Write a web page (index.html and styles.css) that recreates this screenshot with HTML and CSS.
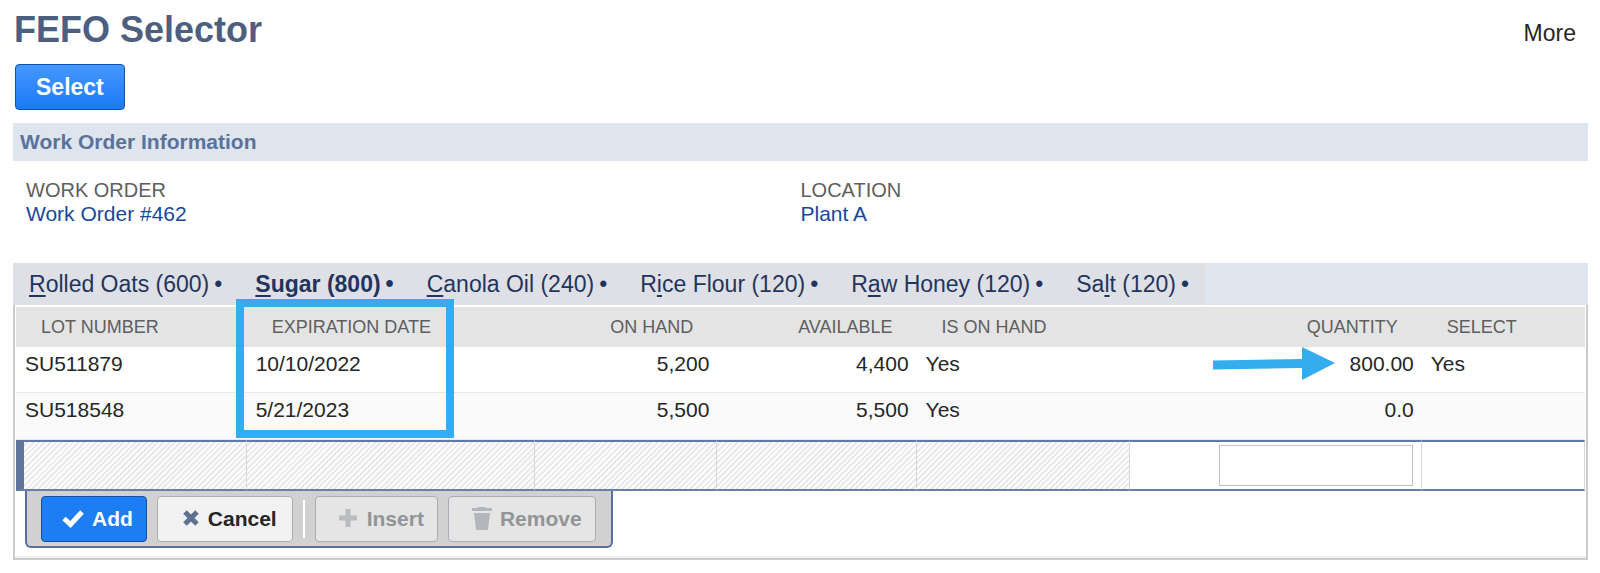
FILE: index.html
```html
<!DOCTYPE html>
<html lang="en">
<head>
<meta charset="utf-8">
<title>FEFO Selector</title>
<link rel="stylesheet" href="styles.css">
</head>
<body>
<header class="page-head">
  <h1 class="title">FEFO Selector</h1>
  <a class="more" href="#more">More</a>
</header>
<button class="btn btn-select" type="button">Select</button>

<section>
  <h2 class="section-bar">Work Order Information</h2>
  <dl class="fields">
    <div class="field">
      <dt>WORK ORDER</dt>
      <dd><a href="#wo462">Work Order #462</a></dd>
    </div>
    <div class="field">
      <dt>LOCATION</dt>
      <dd><a href="#plant-a">Plant A</a></dd>
    </div>
  </dl>
</section>

<nav class="tabs">
  <div class="tab-list">
    <a class="tab" href="#oats"><span><u>R</u>olled Oats (600)</span><span>•</span></a>
    <a class="tab active" href="#sugar" aria-current="page"><span><u>S</u>ugar (800)</span><span>•</span></a>
    <a class="tab" href="#oil"><span><u>C</u>anola Oil (240)</span><span>•</span></a>
    <a class="tab" href="#flour"><span>R<u>i</u>ce Flour (120)</span><span>•</span></a>
    <a class="tab" href="#honey"><span>R<u>a</u>w Honey (120)</span><span>•</span></a>
    <a class="tab" href="#salt"><span>Sa<u>l</u>t (120)</span><span>•</span></a>
  </div>
</nav>

<main class="panel">
  <table class="lots">
    <colgroup>
      <col class="c-lot"><col class="c-exp"><col class="c-hand"><col class="c-avail"><col class="c-is"><col class="c-qty"><col>
    </colgroup>
    <thead>
      <tr>
        <th scope="col">LOT NUMBER</th>
        <th scope="col" class="anchor">EXPIRATION DATE<span class="highlight"></span></th>
        <th scope="col" class="num">ON HAND</th>
        <th scope="col" class="num">AVAILABLE</th>
        <th scope="col">IS ON HAND</th>
        <th scope="col" class="num">QUANTITY</th>
        <th scope="col">SELECT</th>
      </tr>
    </thead>
    <tbody>
      <tr>
        <td>SU511879</td><td>10/10/2022</td><td class="num">5,200</td><td class="num">4,400</td><td>Yes</td>
        <td class="num anchor">800.00<svg class="arrow" width="122" height="34" viewBox="0 0 122 34" aria-hidden="true"><path d="M0 13.5 89 12V0L122 16 89 33V21L0 22.5Z" fill="#33adee"/></svg></td>
        <td>Yes</td>
      </tr>
      <tr class="alt">
        <td>SU518548</td><td>5/21/2023</td><td class="num">5,500</td><td class="num">5,500</td><td>Yes</td>
        <td class="num">0.0</td><td></td>
      </tr>
      <tr class="edit">
        <td class="locked first"></td><td class="locked"></td><td class="locked"></td><td class="locked"></td><td class="locked"></td>
        <td class="num"><input class="qty" type="text" aria-label="Quantity"></td>
        <td></td>
      </tr>
    </tbody>
  </table>
  <div class="toolbar">
    <button class="btn btn-add" type="button">
      <svg width="22" height="18" viewBox="0 0 22 18" aria-hidden="true"><path d="M2 8.500 8.500 14.500 20 2" fill="none" stroke="#fff" stroke-width="5"/></svg>Add</button>
    <button class="btn btn-cancel" type="button">
      <svg width="18" height="18" viewBox="0 0 18 18" aria-hidden="true"><path d="M3 2 15 14M15 2 3 14" fill="none" stroke="#5f7190" stroke-width="5"/></svg>Cancel</button>
    <span class="divider"></span>
    <button class="btn btn-insert" type="button" disabled>
      <svg width="20" height="20" viewBox="0 0 20 20" aria-hidden="true"><path d="M9 0V18M0 9H18" fill="none" stroke="#b9bbbe" stroke-width="5"/></svg>Insert</button>
    <button class="btn btn-remove" type="button" disabled>
      <svg width="20" height="24" viewBox="0 0 20 24" aria-hidden="true"><path d="M0 1H6V0H14V1H20V4H0ZM2 6H18L16 23H4Z" fill="#b3b6ba"/></svg>Remove</button>
  </div>
</main>
</body>
</html>
```
FILE: styles.css
```css
* { box-sizing: border-box; }

body {
  margin: 0;
  padding: 8px 12px 12px 13px;
  background: #fff;
  color: #262626;
  font-family: "Liberation Sans", Arial, sans-serif;
  font-size: 21px;
  line-height: 24px;
}

h1, h2, dl, dd { margin: 0; }
a { color: #18489c; text-decoration: none; }

.page-head {
  display: flex;
  justify-content: space-between;
  height: 56px;
}
.title {
  padding-left: 1px;
  color: #4d5f7e;
  font-size: 36px;
  line-height: 44px;
}
.more {
  padding: 12px 12px 0 0;
  color: #262626;
  font-size: 23px;
  line-height: 26px;
}

.btn {
  display: inline-flex;
  align-items: center;
  height: 46px;
  border: 1px solid #a9aeb6;
  border-radius: 4px;
  padding: 0 15px 0 20px;
  background: #f2f2f2;
  color: #262626;
  font: bold 21px "Liberation Sans", Arial, sans-serif;
}
.btn-select {
  display: flex;
  margin: 0 0 13px 2px;
  padding: 0 20px;
  border-color: #1350a8;
  background: linear-gradient(#4697ff, #1a7bf5);
  color: #fff;
  font-size: 23px;
}

.section-bar {
  padding: 7px;
  background: #dfe5ef;
  color: #5b7299;
  font-size: 21px;
  line-height: 24px;
}
.fields {
  display: grid;
  grid-template-columns: 1fr 1fr;
  padding: 17px 13px 0;
  height: 102px;
}
.field dt {
  color: #5e5e5e;
  font-size: 20px;
}

.tabs { background: #dfe5ef; }
.tab-list {
  display: inline-flex;
  vertical-align: top;
  gap: 33px;
  height: 42px;
  padding: 8px 16px 0;
  background: #dfe0e5;
}
.tab {
  display: flex;
  gap: 5px;
  position: relative;
  color: #1f355e;
  font-size: 23px;
  line-height: 26px;
}
.tab u { text-underline-offset: 3px; text-decoration-thickness: 2px; }
.active { font-weight: bold; }
.active::after {
  content: "";
  position: absolute;
  left: 50%;
  bottom: 0;
  border: 8px solid transparent;
  border-top: 0;
  border-bottom-color: #fff;
}

.panel {
  padding: 2px 1px 10px;
  border: 2px solid #cbcbcb;
  border-top: 0;
  box-shadow: inset 0 -2px #f0f0f0;
}
.lots {
  width: 100%;
  table-layout: fixed;
  border-collapse: separate;
  border-spacing: 0;
}
.c-lot { width: 14.7%; }
.c-exp { width: 18.4%; }
.c-hand { width: 11.6%; }
.c-avail { width: 12.7%; }
.c-is { width: 13.6%; }
.c-qty { width: 18.6%; }

th {
  height: 40px;
  padding: 0 24px 0 25px;
  background: #e4e4e4;
  color: #5e5e5e;
  font-size: 18px;
  font-weight: normal;
  text-align: left;
}
td {
  height: 46px;
  padding: 5px 8px 0 9px;
  border-bottom: 1px solid #e6e6e6;
  vertical-align: top;
}
.num { text-align: right; }
.alt td {
  height: 47px;
  background: #fafafa;
}
.edit td {
  height: 51px;
  padding: 3px 8px 0;
  border-top: 2px solid #5f7aa6;
  border-bottom: 2px solid #687fa6;
  border-right: 1px solid #d5d7dc;
}
.edit .locked {
  background: repeating-linear-gradient(135deg, #fdfdfd 0 2px, #e9e9e9 2px 4px);
}
.edit .first { border-left: 8px solid #5f759c; }
.qty {
  width: 194px;
  height: 41px;
  padding: 0 8px;
  border: 1px solid #bfc1c2;
  background: #fff;
  font: 21px "Liberation Sans", Arial, sans-serif;
  text-align: right;
}

.anchor { position: relative; }
.highlight {
  position: absolute;
  left: -11px;
  top: -8px;
  width: 218px;
  height: 139px;
  border: 8px solid #33adee;
}
.arrow {
  position: absolute;
  right: 87px;
  top: 0;
}

.toolbar {
  display: inline-flex;
  vertical-align: top;
  gap: 10px;
  margin-left: 9px;
  padding: 5px 15px 4px 14px;
  border: 2px solid #566f9b;
  border-top: 0;
  border-radius: 0 0 6px 6px;
  background: #d1d1d1;
}
.toolbar .btn { gap: 8px; }
.toolbar .btn-add {
  padding-right: 13px;
  border-color: #174f9f;
  background: #1c7df5;
  color: #fff;
}
.toolbar .btn-cancel { padding-left: 24px; }
.toolbar .btn-insert,
.toolbar .btn-remove {
  padding: 0 13px 0 23px;
  background: #e5e5e5;
  color: #929497;
}
.divider {
  width: 2px;
  margin: 4px 0;
  background: #fff;
}
```
